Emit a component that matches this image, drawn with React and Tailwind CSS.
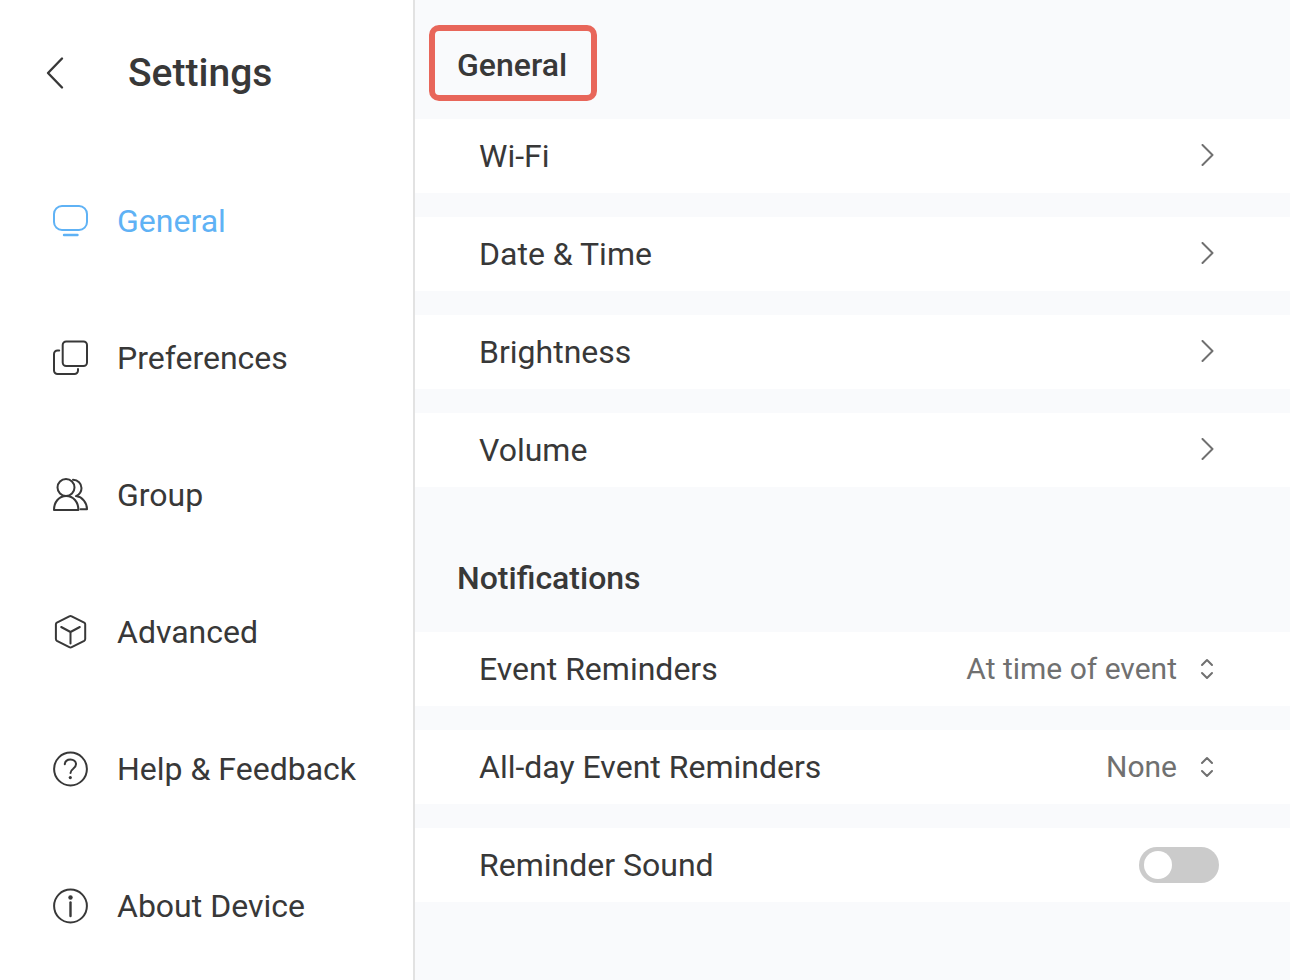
import { useState } from 'react'

const NAV_ITEMS = [
  {
    id: 'general',
    label: 'General',
    icon: (
      <>
        <rect x="1" y="3" width="33" height="24" rx="8" />
        <path d="M11 32h13.5" strokeWidth="2.4" />
      </>
    ),
  },
  {
    id: 'preferences',
    label: 'Preferences',
    icon: (
      <>
        <rect x="9.7" y="1.5" width="24.3" height="24.5" rx="3.5" />
        <path d="M6.2 10.5H4.5A3.5 3.5 0 0 0 1 14v16.500A3.5 3.5 0 0 0 4.5 34H21.500A3.5 3.5 0 0 0 25 30.500V29" />
      </>
    ),
  },
  {
    id: 'group',
    label: 'Group',
    icon: (
      <>
        <circle cx="13" cy="10.5" r="8.5" />
        <path d="M1 33c0-8 5-14 12.200-14S25.400 25 25.400 33Z" />
        <path d="M20 2.800c4.800.2 8.500 3.600 8.500 8.200 0 3.600-2.200 6.700-5.500 8.100 6.500 1 11 6.400 11 13.200h-6.500" />
      </>
    ),
  },
  {
    id: 'advanced',
    label: 'Advanced',
    icon: (
      <>
        <path d="M16.300 2.300 3.900 8.600Q2.900 9.200 2.900 10.300V25Q2.900 26.200 3.900 26.800L16.300 33.200Q17.500 33.800 18.700 33.200L31.200 26.800Q32.200 26.200 32.200 25V10.300Q32.200 9.200 31.200 8.600L18.700 2.300Q17.500 1.700 16.300 2.300Z" />
        <path d="M8.200 13l9.300 5 9.300-5M17.500 18v11.500" />
      </>
    ),
  },
  {
    id: 'help',
    label: 'Help & Feedback',
    icon: (
      <>
        <circle cx="17.500" cy="18" r="16.400" />
        <path d="M11.800 13.200c.3-2.900 2.600-4.700 5.600-4.700 3.200 0 5.600 1.900 5.600 4.700 0 2.200-1.300 3.300-2.800 4.500-1.600 1.200-2.700 2.100-2.700 4.300" />
        <circle cx="17.300" cy="26.600" r="1.600" fill="currentColor" stroke="none" />
      </>
    ),
  },
  {
    id: 'about',
    label: 'About Device',
    icon: (
      <>
        <circle cx="17.500" cy="18" r="16.400" />
        <circle cx="17.500" cy="9.500" r="2.200" fill="currentColor" stroke="none" />
        <path d="M17.500 14.500v13.500" strokeWidth="2.400" />
      </>
    ),
  },
]

const GENERAL_ROWS = ['Wi-Fi', 'Date & Time', 'Brightness', 'Volume']

function Sidebar({ active, onSelect }) {
  return (
    <aside className="w-[415px] shrink-0 border-r-2 border-[#e2e2e2] bg-white">
      <header className="mb-1.5 flex h-[146px] items-center">
        <button type="button" aria-label="Back" className="ml-[43px] mr-[61px]">
          <svg width="24" height="36" viewBox="0 0 24 36" fill="none" stroke="currentColor" strokeWidth="2.4" strokeLinecap="round" strokeLinejoin="round">
            <path d="M19 3.500 5 18l14 14.500" />
          </svg>
        </button>
        <h1 className="text-[39px] font-medium">Settings</h1>
      </header>
      <nav>
        {NAV_ITEMS.map(({ id, label, icon }) => (
          <a
            key={id}
            href={`#${id}`}
            onClick={() => onSelect(id)}
            className={`flex h-[137px] items-center gap-7 pl-[53px] ${id === active ? 'text-[#5fb2f5]' : ''}`}
          >
            <svg width="36" height="36" viewBox="0 0 36 36" fill="none" stroke="currentColor" strokeWidth="2" strokeLinecap="round" strokeLinejoin="round" aria-hidden="true">
              {icon}
            </svg>
            {label}
          </a>
        ))}
      </nav>
    </aside>
  )
}

function SectionTitle({ highlighted, children }) {
  return (
    <div className="px-[14px] pt-[25px] pb-[18px]">
      <h2
        className={`flex h-[76px] w-fit min-w-[168px] items-center rounded-[10px] border-6 px-[22px] pt-1 font-medium ${
          highlighted ? 'border-[#e8665a]' : 'border-transparent'
        }`}
      >
        {children}
      </h2>
    </div>
  )
}

const ROW = 'flex h-[74px] w-full items-center justify-between bg-white pl-16 pr-[71px] text-left'

function LinkRow({ label }) {
  return (
    <button type="button" className={ROW}>
      {label}
      <svg width="24" height="24" viewBox="0 0 24 24" fill="none" stroke="#707070" strokeWidth="2" strokeLinecap="round" strokeLinejoin="round" aria-hidden="true">
        <path d="M7.500 1 17.500 11 7.500 21" />
      </svg>
    </button>
  )
}

function SelectRow({ id, label, options }) {
  return (
    <div className={ROW}>
      <label htmlFor={id}>{label}</label>
      <div className="relative flex items-center text-[#707070]">
        <select
          id={id}
          className="field-sizing-content appearance-none bg-transparent pr-[42px] text-right text-[30px]"
        >
          {options.map((option) => (
            <option key={option}>{option}</option>
          ))}
        </select>
        <svg className="pointer-events-none absolute right-0" width="24" height="24" viewBox="0 0 24 24" fill="none" stroke="currentColor" strokeWidth="2" strokeLinecap="round" strokeLinejoin="round" aria-hidden="true">
          <path d="M7 8l5-5 5 5M7 16l5 5 5-5" />
        </svg>
      </div>
    </div>
  )
}

function ToggleRow({ id, label }) {
  return (
    <div className={ROW}>
      <label htmlFor={id}>{label}</label>
      <input
        id={id}
        type="checkbox"
        role="switch"
        className="flex h-9 w-20 appearance-none items-center rounded-full bg-[#cbcbcb] px-[5px] before:size-7 before:rounded-full before:bg-white before:content-[''] checked:justify-end checked:bg-[#5fb2f5]"
      />
    </div>
  )
}

export default function App() {
  const [active, setActive] = useState('general')

  return (
    <div className="flex min-h-screen bg-[#f9fafc] font-[Roboto,sans-serif] text-[32px] leading-10 text-[#383838]">
      <Sidebar active={active} onSelect={setActive} />
      <main className="min-w-0 flex-1">
        <section>
          <SectionTitle highlighted>General</SectionTitle>
          <div className="flex flex-col gap-6">
            {GENERAL_ROWS.map((label) => (
              <LinkRow key={label} label={label} />
            ))}
          </div>
        </section>
        <section className="mt-[26px]">
          <SectionTitle>Notifications</SectionTitle>
          <div className="flex flex-col gap-6">
            <SelectRow
              id="event-reminders"
              label="Event Reminders"
              options={['At time of event', 'None']}
            />
            <SelectRow
              id="all-day-reminders"
              label="All-day Event Reminders"
              options={['None', 'On day of event']}
            />
            <ToggleRow id="reminder-sound" label="Reminder Sound" />
          </div>
        </section>
      </main>
    </div>
  )
}
